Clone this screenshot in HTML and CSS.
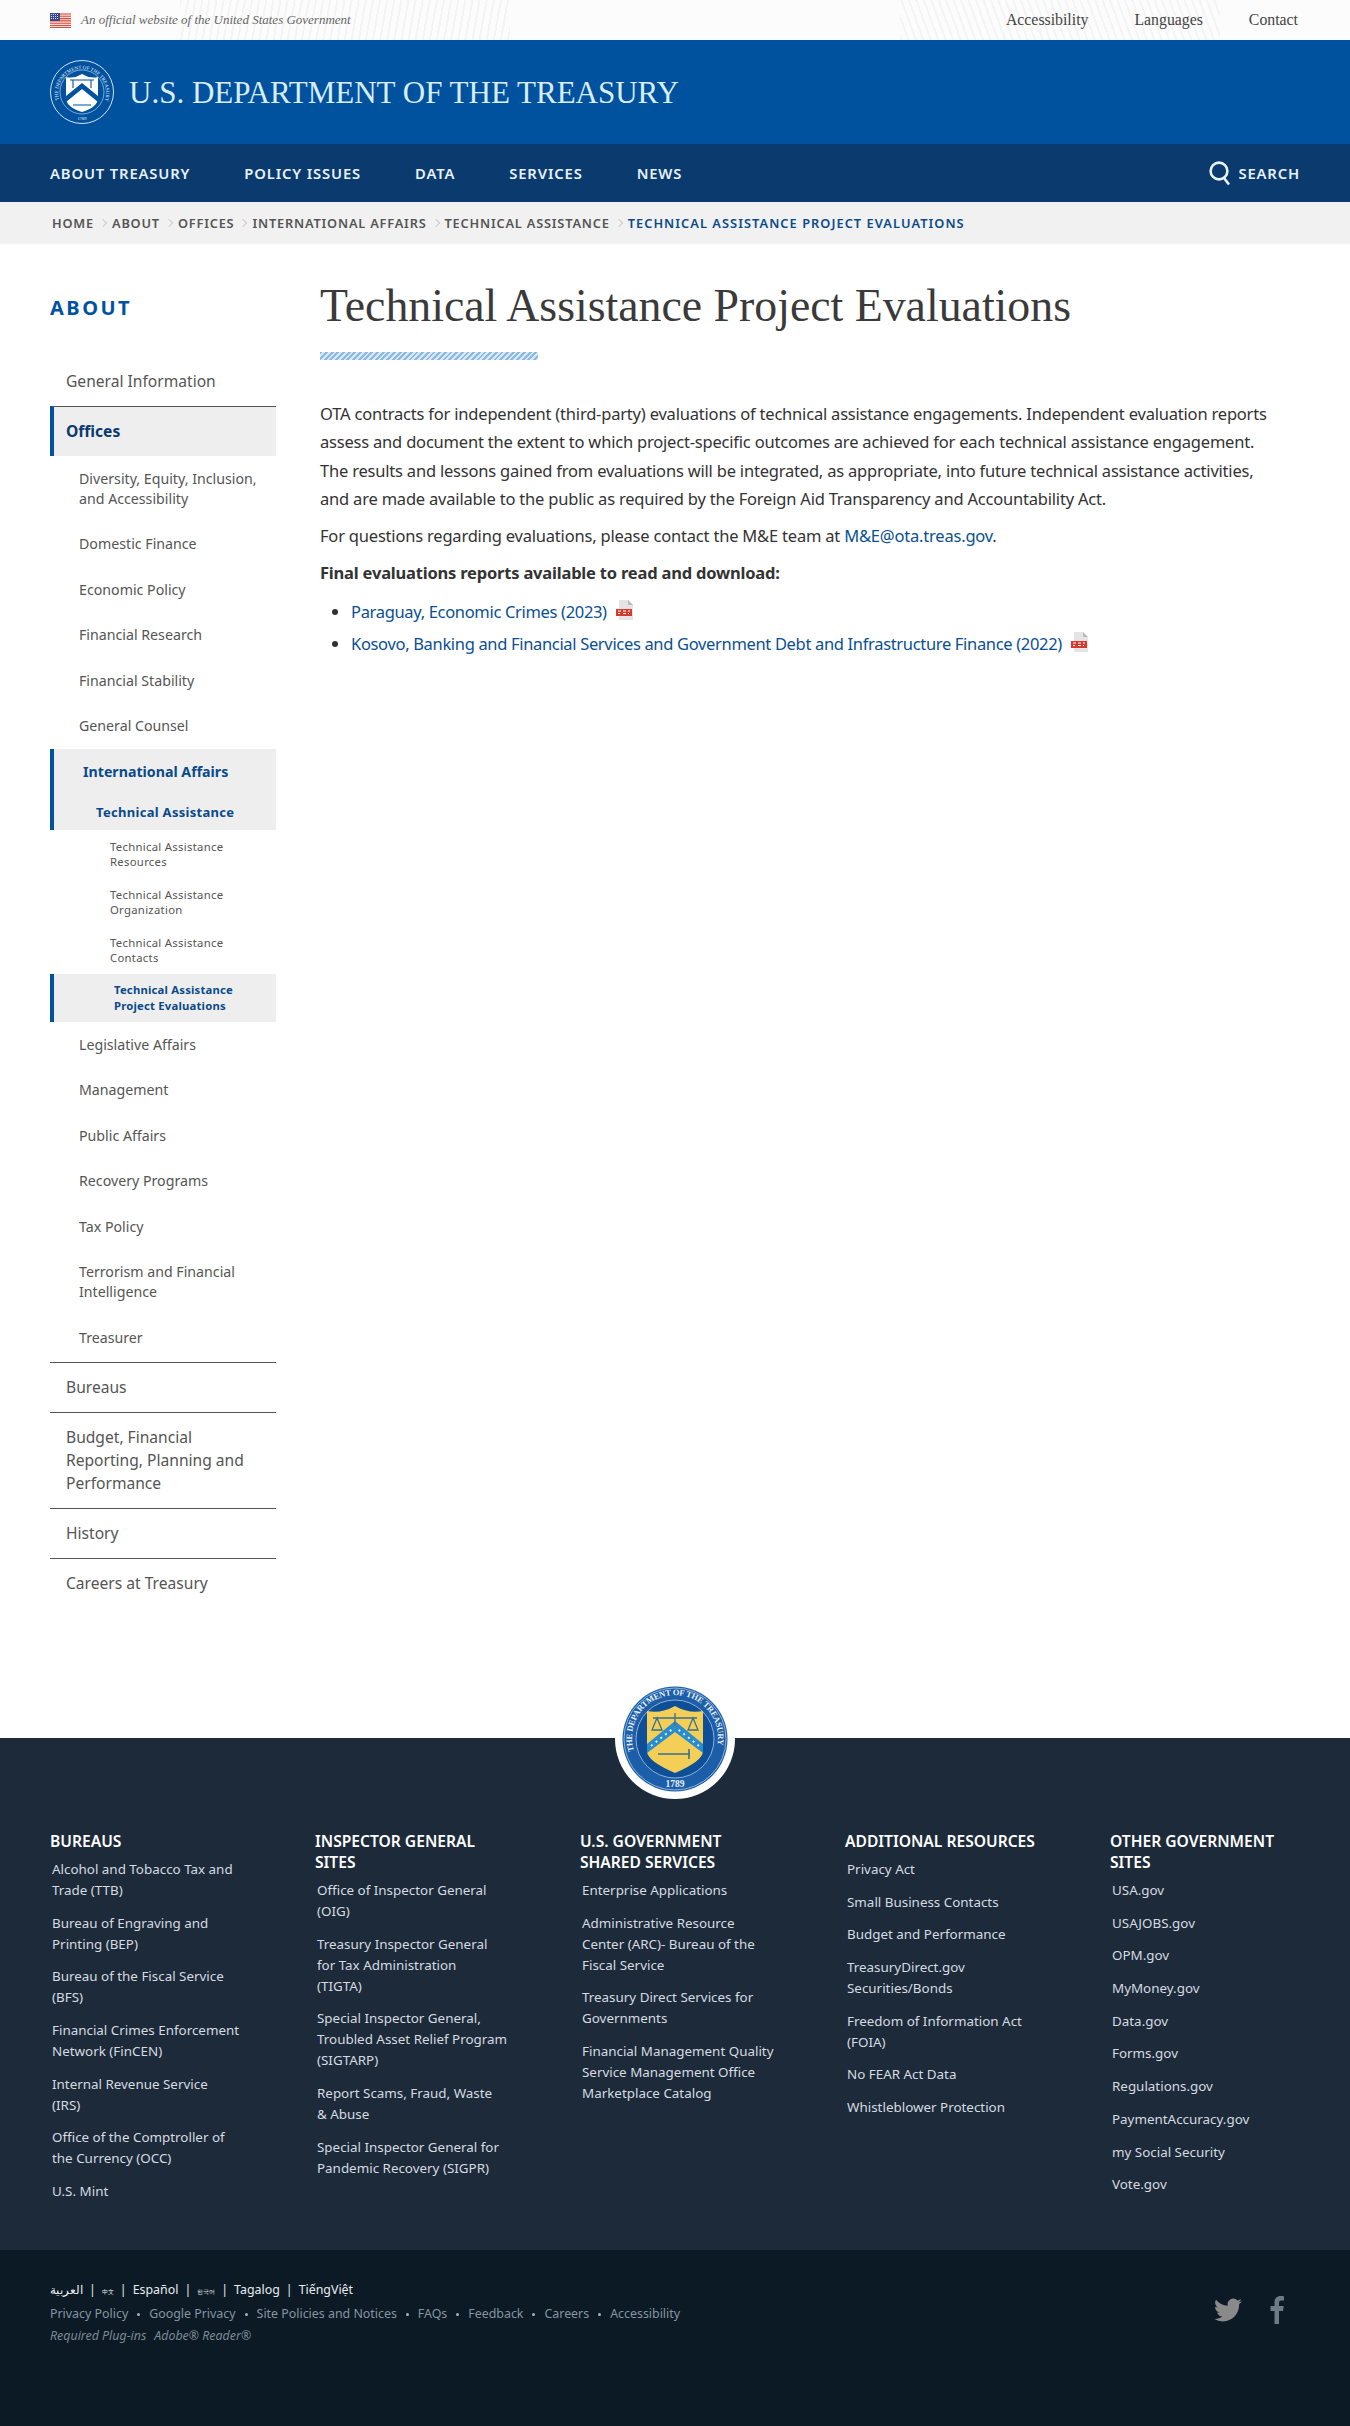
FILE: index.html
```html
<!DOCTYPE html>
<html lang="en">
<head>
<meta charset="utf-8">
<title>Technical Assistance Project Evaluations</title>
<meta name="viewport" content="width=device-width, initial-scale=1.0">
<link rel="stylesheet" href="styles.css">
</head>
<body>

<div class="topbar">
  <div class="official">
    <svg class="flag" viewBox="0 0 21 15" width="21" height="15">
      <rect width="21" height="15" fill="#f6dcd8"/>
      <path d="M0 1h21M0 3.300h21M0 5.600h21M0 7.900h21M0 10.200h21M0 12.500h21M0 14.500h21" stroke="#d5503f" stroke-width="1.100"/>
      <rect width="10" height="8" fill="#3b4a8c"/>
      <path d="M1 1.500h8M1 3.500h8M1 5.500h8" stroke="#dfe3f2" stroke-width=".9" stroke-dasharray="1 1"/>
    </svg>
    <span>An official website of the United States Government</span>
  </div>
  <div class="toplinks">
    <a>Accessibility</a>
    <a>Languages</a>
    <a>Contact</a>
  </div>
</div>

<header class="masthead">
  <svg class="seal-white" viewBox="0 0 64 64" width="64" height="64">
    <defs><path id="ringw" d="M9 40A24 24 0 1 1 55 40"/></defs>
    <circle cx="32" cy="32" r="31.500" fill="none" stroke="#cfe3f5" stroke-width="1"/>
    <circle cx="32" cy="32" r="22" fill="none" stroke="#cfe3f5" stroke-width=".6"/>
    <text font-size="5" fill="#e6f0fa" font-family="Liberation Serif, serif"><textPath href="#ringw" textLength="90">THE DEPARTMENT OF THE TREASURY</textPath></text>
    <path d="M16 17q8 2 16-3q8 5 16 3v21q0 9-16 14q-16-5-16-14z" fill="#fff"/>
    <path d="M16 36l16-13l16 13v6l-16-13l-16 13z" fill="#00529f"/>
    <path d="M20 20h24M23 20v8M41 20v8M23 45h18" stroke="#00529f" stroke-width="1.100" fill="none"/>
    <text x="32" y="60" font-size="4.500" fill="#e6f0fa" text-anchor="middle" font-family="Liberation Serif, serif">1789</text>
  </svg>
  <div class="sitename">U.S. DEPARTMENT OF THE TREASURY</div>
</header>

<nav class="mainnav">
  <a>ABOUT TREASURY</a>
  <a>POLICY ISSUES</a>
  <a>DATA</a>
  <a>SERVICES</a>
  <a>NEWS</a>
  <div class="search">
    <svg viewBox="0 0 24 24" width="24" height="24" fill="none" stroke="#e8f2fb" stroke-width="2.600"><circle cx="11" cy="10" r="8.400"/><path d="M16 17l5 6.500"/></svg>
    <span>SEARCH</span>
  </div>
</nav>

<div class="crumbs">
  <a>HOME</a><i></i>
  <a>ABOUT</a><i></i>
  <a>OFFICES</a><i></i>
  <a>INTERNATIONAL AFFAIRS</a><i></i>
  <a>TECHNICAL ASSISTANCE</a><i></i>
  <a class="here">TECHNICAL ASSISTANCE PROJECT EVALUATIONS</a>
</div>

<main class="page">
  <aside class="side">
    <h2>ABOUT</h2>
    <ul class="lvl1">
      <li class="plain">General Information</li>
      <li class="on">Offices</li>
      <li class="group">
        <ul class="lvl2">
          <li>Diversity, Equity, Inclusion, and Accessibility</li>
          <li>Domestic Finance</li>
          <li>Economic Policy</li>
          <li>Financial Research</li>
          <li>Financial Stability</li>
          <li>General Counsel</li>
          <li class="on2">
            <div class="ia">International Affairs</div>
            <div class="ta">Technical Assistance</div>
          </li>
          <li class="lvl3">Technical Assistance Resources</li>
          <li class="lvl3">Technical Assistance Organization</li>
          <li class="lvl3">Technical Assistance Contacts</li>
          <li class="on3">Technical Assistance Project Evaluations</li>
          <li>Legislative Affairs</li>
          <li>Management</li>
          <li>Public Affairs</li>
          <li>Recovery Programs</li>
          <li>Tax Policy</li>
          <li>Terrorism and Financial Intelligence</li>
          <li>Treasurer</li>
        </ul>
      </li>
      <li>Bureaus</li>
      <li>Budget, Financial Reporting, Planning and Performance</li>
      <li>History</li>
      <li>Careers at Treasury</li>
    </ul>
  </aside>

  <article class="content">
    <h1>Technical Assistance Project Evaluations</h1>
    <div class="stripe"></div>
    <p>OTA contracts for independent (third-party) evaluations of technical assistance engagements. Independent evaluation reports assess and document the extent to which project-specific outcomes are achieved for each technical assistance engagement. The results and lessons gained from evaluations will be integrated, as appropriate, into future technical assistance activities, and are made available to the public as required by the Foreign Aid Transparency and Accountability Act.</p>
    <p>For questions regarding evaluations, please contact the M&amp;E team at <a>M&amp;E@ota.treas.gov</a>.</p>
    <p><b>Final evaluations reports available to read and download:</b></p>
    <ul class="reports">
      <li><a>Paraguay, Economic Crimes (2023)</a>
        <svg class="pdf" viewBox="0 0 20 20" width="20" height="20"><path d="M4 0h9l5 5v15H4z" fill="#e4e4e4"/><path d="M13 0l5 5h-5z" fill="#bbb"/><rect x="1" y="9" width="16" height="7" fill="#d63a2f"/><path d="M3 11h3M8 11h3M13 11h2M3 13.500h2M8 13.500h3M13 13.500h1" stroke="#fff"/></svg>
      </li>
      <li><a>Kosovo, Banking and Financial Services and Government Debt and Infrastructure Finance (2022)</a>
        <svg class="pdf" viewBox="0 0 20 20" width="20" height="20"><path d="M4 0h9l5 5v15H4z" fill="#e4e4e4"/><path d="M13 0l5 5h-5z" fill="#bbb"/><rect x="1" y="9" width="16" height="7" fill="#d63a2f"/><path d="M3 11h3M8 11h3M13 11h2M3 13.500h2M8 13.500h3M13 13.500h1" stroke="#fff"/></svg>
      </li>
    </ul>
  </article>
</main>

<footer class="foot">
  <svg class="seal" viewBox="0 0 120 120" width="120" height="120">
    <defs><path id="ringc" d="M19 72A43 43 0 1 1 101 72"/></defs>
    <circle cx="60" cy="60" r="60" fill="#fff"/>
    <circle cx="60" cy="60" r="52.500" fill="#1c5ea8"/>
    <circle cx="60" cy="60" r="51" fill="none" stroke="#a9c6e6" stroke-width=".8"/>
    <circle cx="60" cy="60" r="39" fill="#0f4f98" stroke="#a9c6e6" stroke-width=".8"/>
    <text font-size="8.500" font-weight="bold" fill="#e8f0f8" font-family="Liberation Serif, serif"><textPath href="#ringc" textLength="155">THE DEPARTMENT OF THE TREASURY</textPath></text>
    <text x="60" y="108" font-size="9.500" font-weight="bold" fill="#e8f0f8" text-anchor="middle" font-family="Liberation Serif, serif">1789</text>
    <path d="M32 32q14 3 28-5q14 8 28 5v40q0 10-28 22q-28-12-28-22z" fill="#f3cf58"/>
    <path d="M32 65l28-23l28 23v9l-28-21l-28 21z" fill="#2a8ccc"/>
    <path d="M36 67l24-19M84 67l-24-19" stroke="#d5ecfa" stroke-width="2" stroke-dasharray="2 4"/>
    <path d="M38 39h44M60 34v15M42 39l-5 12h10zM78 39l-5 12h10z" fill="none" stroke="#3b6f8f" stroke-width="1.300"/>
    <path d="M43 75h32M74 70v10" stroke="#3b6f8f" stroke-width="1.600" fill="none"/>
  </svg>

  <div class="sitemap">
    <div class="col">
      <h3>BUREAUS</h3>
      <a>Alcohol and Tobacco Tax and Trade (TTB)</a>
      <a>Bureau of Engraving and Printing (BEP)</a>
      <a>Bureau of the Fiscal Service (BFS)</a>
      <a>Financial Crimes Enforcement Network (FinCEN)</a>
      <a>Internal Revenue Service<br>(IRS)</a>
      <a>Office of the Comptroller of<br>the Currency (OCC)</a>
      <a>U.S. Mint</a>
    </div>
    <div class="col">
      <h3>INSPECTOR GENERAL SITES</h3>
      <a>Office of Inspector General (OIG)</a>
      <a>Treasury Inspector General<br>for Tax Administration<br>(TIGTA)</a>
      <a>Special Inspector General, Troubled Asset Relief Program (SIGTARP)</a>
      <a>Report Scams, Fraud, Waste<br>&amp; Abuse</a>
      <a>Special Inspector General for Pandemic Recovery (SIGPR)</a>
    </div>
    <div class="col">
      <h3>U.S. GOVERNMENT SHARED SERVICES</h3>
      <a>Enterprise Applications</a>
      <a>Administrative Resource<br>Center (ARC)- Bureau of the Fiscal Service</a>
      <a>Treasury Direct Services for Governments</a>
      <a>Financial Management Quality<br>Service Management Office Marketplace Catalog</a>
    </div>
    <div class="col">
      <h3>ADDITIONAL RESOURCES</h3>
      <a>Privacy Act</a>
      <a>Small Business Contacts</a>
      <a>Budget and Performance</a>
      <a>TreasuryDirect.gov Securities/Bonds</a>
      <a>Freedom of Information Act (FOIA)</a>
      <a>No FEAR Act Data</a>
      <a>Whistleblower Protection</a>
    </div>
    <div class="col">
      <h3>OTHER GOVERNMENT SITES</h3>
      <a>USA.gov</a>
      <a>USAJOBS.gov</a>
      <a>OPM.gov</a>
      <a>MyMoney.gov</a>
      <a>Data.gov</a>
      <a>Forms.gov</a>
      <a>Regulations.gov</a>
      <a>PaymentAccuracy.gov</a>
      <a>my Social Security</a>
      <a>Vote.gov</a>
    </div>
  </div>

  <div class="legal">
    <div class="legal-text">
      <div class="langs">
        <a>العربية</a><i>|</i><a class="cjk">中文</a><i>|</i><a>Español</a><i>|</i><a class="cjk">한국어</a><i>|</i><a>Tagalog</a><i>|</i><a>TiếngViệt</a>
      </div>
      <div class="policy">
        <a>Privacy Policy</a><i></i><a>Google Privacy</a><i></i><a>Site Policies and Notices</a><i></i><a>FAQs</a><i></i><a>Feedback</a><i></i><a>Careers</a><i></i><a>Accessibility</a>
      </div>
      <div class="plugins"><span>Required Plug-ins</span><span>Adobe® Reader®</span></div>
    </div>
    <div class="social">
      <svg viewBox="0 0 24 24" width="28" height="28" fill="#8a8a8a"><path d="M23.953 4.570a10 10 0 01-2.825.775 4.958 4.958 0 002.163-2.723c-.951.555-2.005.959-3.127 1.184a4.920 4.920 0 00-8.384 4.482C7.690 8.095 4.067 6.130 1.640 3.162a4.822 4.822 0 00-.666 2.475c0 1.710.870 3.213 2.188 4.096a4.904 4.904 0 01-2.228-.616v.060a4.923 4.923 0 003.946 4.827 4.996 4.996 0 01-2.212.085 4.936 4.936 0 004.604 3.417 9.867 9.867 0 01-6.102 2.105c-.390 0-.779-.023-1.170-.067a13.995 13.995 0 007.557 2.209c9.053 0 13.998-7.496 13.998-13.985 0-.210 0-.420-.015-.630A9.935 9.935 0 0024 4.590z"/></svg>
      <svg viewBox="0 0 14 28" width="14" height="28" fill="#6d7b87"><path d="M9 28V15h4l.7-5H9V7c0-1.500.4-2.400 2.400-2.400H14V.3C13.500.2 12.100 0 10.500 0 7 0 4.500 2.200 4.500 6.200V10H.5v5h4v13z"/></svg>
    </div>
  </div>
</footer>

</body>
</html>
```

FILE: styles.css
```css
body, html {
  margin: 0;
  padding: 0;
}

body {
  font-family: "Noto Sans", sans-serif;
  color: #333;
  background: #fff;
}

ul {
  list-style: none;
  margin: 0;
  padding: 0;
}

/* top strip */
.topbar {
  height: 40px;
  padding: 0 52px 0 50px;
  display: flex;
  justify-content: space-between;
  align-items: center;
  font-family: "Liberation Serif", serif;
  background:
    repeating-linear-gradient(100deg, rgba(120,120,120,.06) 0 2px, transparent 2px 7px) 180px 0 / 330px 40px no-repeat,
    repeating-linear-gradient(70deg, rgba(120,120,120,.06) 0 2px, transparent 2px 7px) 900px 0 / 320px 40px no-repeat,
    #fcfcfc;
}

.official {
  display: flex;
  align-items: center;
  gap: 10px;
  font-style: italic;
  font-size: 13px;
  color: #666;
}

.toplinks {
  display: flex;
  gap: 46px;
  font-size: 15.8px;
  color: #444;
}

/* blue header */
.masthead {
  height: 104px;
  padding-left: 50px;
  display: flex;
  align-items: center;
  gap: 15px;
  background: #00529f;
}

.sitename {
  padding-top: 2px;
  font-family: "Liberation Serif", serif;
  font-size: 31px;
  color: #d9edfb;
}

.mainnav {
  height: 58px;
  padding: 0 50px;
  display: flex;
  align-items: center;
  background: #0a3a6e;
  color: #e6f1fa;
  font-size: 14.8px;
  font-weight: 600;
  letter-spacing: .85px;
}

.mainnav a {
  margin-right: 54px;
}

.search {
  margin-left: auto;
  display: flex;
  align-items: center;
  gap: 6px;
}

/* breadcrumb */
.crumbs {
  height: 42px;
  padding-left: 52px;
  display: flex;
  align-items: center;
  background: #f1f1f1;
  font-size: 12.8px;
  font-weight: 600;
  letter-spacing: .8px;
  color: #555;
}

.crumbs i {
  width: 5px;
  height: 5px;
  margin: 0 6px;
  border-top: 1px solid #ccc;
  border-right: 1px solid #ccc;
  transform: rotate(45deg);
}

.crumbs .here {
  color: #0a4a8a;
  letter-spacing: 1.05px;
}

/* main part */
.page {
  height: 1494px;
  padding: 50px 0 0 50px;
  box-sizing: border-box;
  display: flex;
}

.side {
  width: 226px;
  margin-right: 44px;
  flex: none;
}

.side h2 {
  margin: 0 0 35px;
  font-size: 20px;
  line-height: 28px;
  font-weight: 700;
  letter-spacing: 2.5px;
  color: #00529f;
}

.lvl1 > li {
  padding: 13px 10px 13px 16px;
  font-size: 15.6px;
  line-height: 23px;
  color: #555;
  border-top: 1px solid #555;
}

.lvl1 > li.plain {
  border-top: 0;
}

.lvl1 > li.on {
  padding-left: 12px;
  border-left: 4px solid #00529f;
  background: #eee;
  color: #0a3a6e;
  font-weight: 700;
}

.lvl1 > li.group {
  padding: 0 0 1px;
  border-top: 0;
}

.lvl2 > li {
  padding: 12.75px 14px 12.75px 29px;
  font-size: 14.2px;
  line-height: 20px;
  color: #555;
}

.lvl2 > li.on2 {
  padding: 13px 0 8px 0;
  border-left: 4px solid #00529f;
  background: #eee;
  color: #0a4a8a;
  font-weight: 700;
}

.ia {
  padding-left: 29px;
}

.ta {
  margin-top: 20px;
  padding-left: 42px;
  font-size: 13px;
  letter-spacing: .3px;
}

.lvl2 > li.lvl3 {
  height: 48px;
  box-sizing: border-box;
  padding: 9px 40px 0 60px;
  font-size: 11.3px;
  line-height: 15px;
  letter-spacing: .3px;
}

.lvl2 > li.on3 {
  padding: 8px 40px 8px 60px;
  border-left: 4px solid #00529f;
  background: #eee;
  color: #0a4a8a;
  font-size: 11.3px;
  line-height: 16px;
  font-weight: 700;
  letter-spacing: .2px;
}

/* article */
.content {
  width: 950px;
}

.content h1 {
  margin: 0;
  font-family: "Liberation Serif", serif;
  font-weight: 400;
  font-size: 45.8px;
  line-height: 24px;
  color: #3a3a3a;
}

.stripe {
  width: 218px;
  height: 8px;
  margin: 34px 0 40px;
  background: repeating-linear-gradient(135deg, #8db8e2 0 2px, #d9e8f6 2px 4px);
}

.content p {
  margin: 0 0 8.7px;
  font-size: 16.5px;
  line-height: 28.3px;
  letter-spacing: -.2px;
  color: #333;
}

.content a {
  color: #0a4f93;
}

.reports {
  list-style: disc;
  margin-top: 9px;
  padding-left: 31px;
  font-size: 16.5px;
  line-height: 32px;
  letter-spacing: -.33px;
}

.reports li {
  color: #333;
}

.pdf {
  margin-left: 4px;
  vertical-align: -2px;
}

/* footer */
.foot {
  position: relative;
  background: #1c2a3a;
  color: #d6dbe0;
}

.seal {
  position: absolute;
  left: 615px;
  top: -59px;
}

.sitemap {
  height: 512px;
  box-sizing: border-box;
  padding: 93px 0 0 50px;
  display: grid;
  grid-template-columns: repeat(5, 265px);
}

.col h3 {
  margin: 0 0 7px;
  width: 192px;
  font-size: 15.6px;
  line-height: 21px;
  font-weight: 600;
  color: #fff;
}

.col a {
  display: block;
  width: 200px;
  margin: 0 0 11.7px 2px;
  font-size: 13.4px;
  line-height: 21px;
}

.legal {
  height: 176px;
  box-sizing: border-box;
  padding: 29px 66px 0 50px;
  display: flex;
  justify-content: space-between;
  background: #0c1a25;
}

.legal-text {
  font-size: 12.4px;
}

.langs {
  line-height: 22px;
  color: #e8ecef;
}

.langs i {
  font-style: normal;
  margin: 0 6px;
}

.langs .cjk {
  font-size: 5.5px;
}

.policy {
  line-height: 22px;
  color: #8794a0;
}

.policy i {
  display: inline-block;
  width: 3px;
  height: 3px;
  margin: 0 9px;
  border-radius: 50%;
  background: #aab3bb;
  vertical-align: middle;
}

.plugins {
  line-height: 22px;
  font-style: italic;
  color: #7c8995;
}

.plugins span {
  margin-right: 8px;
}

.social {
  display: flex;
  gap: 28px;
  align-items: center;
  height: 34px;
  padding-top: 14px;
}
```
